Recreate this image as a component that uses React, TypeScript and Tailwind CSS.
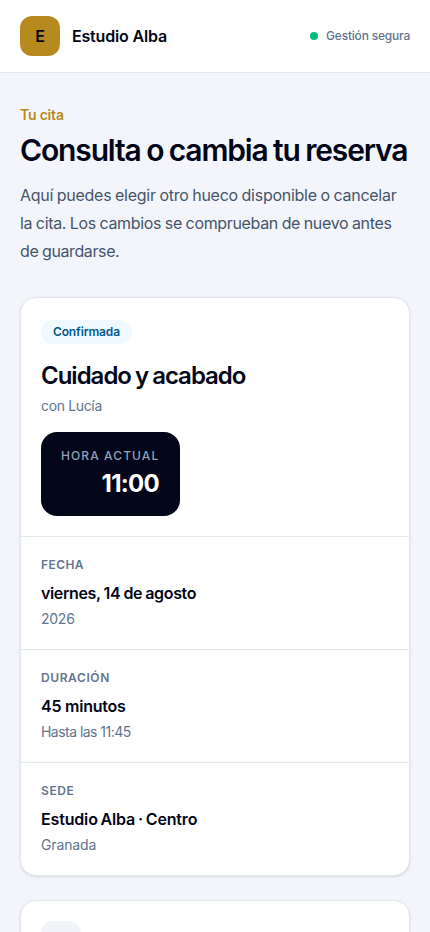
import React from 'react';

interface DetailRowProps {
  label: string;
  value: string;
  note: string;
  labelClass: string;
  valueClass: string;
  noteClass: string;
}

const DetailRow: React.FC<DetailRowProps> = ({ label, value, note, labelClass, valueClass, noteClass }) => {
  return (
    <div className="border-t border-slate-200 p-5">
      <dt className={`text-xs font-semibold uppercase text-slate-500 ${labelClass}`}>{label}</dt>
      <dd className={`mt-2 text-base font-semibold text-slate-950 ${valueClass}`}>{value}</dd>
      <dd className={`mt-1 text-sm text-slate-500 ${noteClass}`}>{note}</dd>
    </div>
  );
};

const details: DetailRowProps[] = [
  {
    label: 'Fecha',
    value: 'viernes, 14 de agosto',
    note: '2026',
    labelClass: 'tracking-[0.035em]',
    valueClass: 'tracking-[-0.023em] [word-spacing:-0.5px]',
    noteClass: 'tracking-[-0.018em]',
  },
  {
    label: 'Duración',
    value: '45 minutos',
    note: 'Hasta las 11:45',
    labelClass: 'tracking-[0.05em]',
    valueClass: 'tracking-[-0.015em]',
    noteClass: 'tracking-[-0.038em]',
  },
  {
    label: 'Sede',
    value: 'Estudio Alba · Centro',
    note: 'Granada',
    labelClass: 'tracking-[0.05em]',
    valueClass: 'tracking-[-0.01em] [word-spacing:-1px]',
    noteClass: 'tracking-[-0.01em]',
  },
];

export default function App() {
  return (
    <div className="h-screen overflow-hidden whitespace-nowrap bg-[#f4f5fa] font-['Inter',sans-serif] text-slate-950">
      <header className="flex h-[73px] items-center justify-between border-b border-slate-200 bg-white px-5">
        <div className="flex items-center gap-3">
          <span className="flex size-10 items-center justify-center rounded-xl bg-[#b78a20] text-base font-semibold">
            E
          </span>
          <span className="text-base font-semibold tracking-[-0.011em]">Estudio Alba</span>
        </div>
        <div className="flex items-center gap-2 text-xs font-medium tracking-[-0.017em] text-slate-500">
          <span className="size-2 rounded-full bg-[#00bc7d]" />
          Gestión segura
        </div>
      </header>

      <main className="px-5 pt-8">
        <p className="text-sm font-semibold tracking-[-0.015em] text-[#b78a20]">Tu cita</p>
        <h1 className="mt-[7px] text-3xl font-semibold tracking-[-0.038em] [word-spacing:-1px]">
          Consulta o cambia tu reserva
        </h1>
        <p className="mt-[13px] text-base leading-7 text-slate-600 [word-spacing:-0.5px]">
          <span className="tracking-[-0.017em]">Aquí puedes elegir otro hueco disponible o cancelar</span>
          <br />
          <span className="tracking-[-0.021em]">la cita. Los cambios se comprueban de nuevo antes</span>
          <br />
          <span className="tracking-[-0.024em]">de guardarse.</span>
        </p>

        <section className="mt-8 rounded-2xl border border-slate-200 bg-white shadow-sm">
          <div className="flex flex-col items-start px-5 pt-[22px] pb-5">
            <span className="rounded-full bg-[#f0f9ff] px-3 py-1 text-xs font-semibold tracking-[-0.012em] text-[#00598a]">
              Confirmada
            </span>
            <h2 className="mt-4 text-2xl font-semibold tracking-[-0.042em] [word-spacing:-1px]">
              Cuidado y acabado
            </h2>
            <p className="mt-1 text-sm tracking-[-0.025em] text-slate-500">con Lucía</p>
            <div className="mt-4 w-[139px] rounded-2xl bg-slate-950 px-5 py-4 text-right">
              <p className="pr-px text-xs font-medium tracking-[0.091em] text-slate-400">HORA ACTUAL</p>
              <p className="mt-1 pr-px text-2xl font-bold tracking-[-0.03em] text-white">11:00</p>
            </div>
          </div>
          <dl>
            {details.map((item) => (
              <DetailRow key={item.label} {...item} />
            ))}
          </dl>
        </section>

        <section className="mt-6 h-40 rounded-2xl border border-slate-200 bg-white p-5 shadow-sm">
          <div className="size-10 rounded-xl bg-slate-100" />
        </section>
      </main>
    </div>
  );
}
